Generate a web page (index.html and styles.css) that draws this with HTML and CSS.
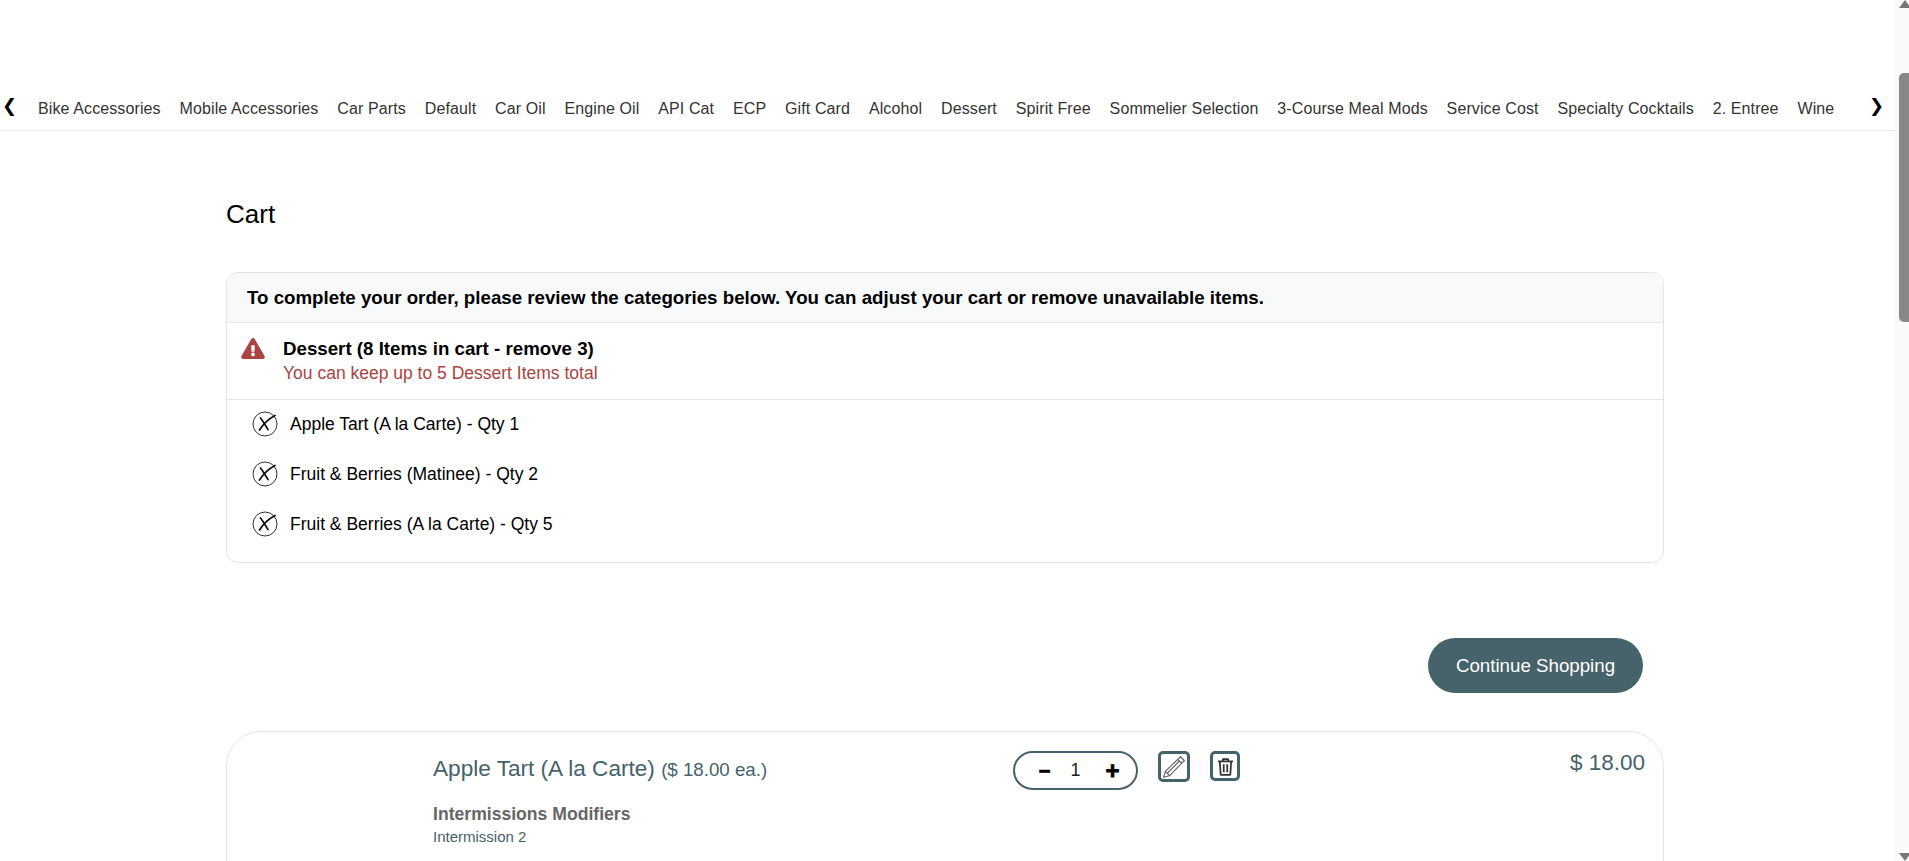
FILE: index.html
```html
<!DOCTYPE html>
<html lang="en">
<head>
<meta charset="utf-8">
<title>Cart</title>
<link rel="stylesheet" href="styles.css">
</head>
<body>
<div class="page">
  <nav class="catnav">
    <span class="arrow">❮</span>
    <ul class="catlist">
      <li>Bike Accessories</li><li>Mobile Accessories</li><li>Car Parts</li><li>Default</li><li>Car Oil</li><li>Engine Oil</li><li>API Cat</li><li>ECP</li><li>Gift Card</li><li>Alcohol</li><li>Dessert</li><li>Spirit Free</li><li>Sommelier Selection</li><li>3-Course Meal Mods</li><li>Service Cost</li><li>Specialty Cocktails</li><li>2. Entree</li><li>Wine</li>
    </ul>
    <span class="arrow arrow-right">❯</span>
  </nav>
  <main class="content">
    <h1 class="title">Cart</h1>
    <section class="review">
      <div class="review-head">To complete your order, please review the categories below. You can adjust your cart or remove unavailable items.</div>
      <div class="review-cat">
        <svg class="warn" viewBox="0 0 576 512" width="24" height="21"><path fill="#a94442" d="M569.517 440.013C587.975 472.007 564.806 512 527.94 512H48.054c-36.937 0-59.999-40.055-41.577-71.987L246.423 23.985c18.467-32.009 64.72-31.951 83.154 0l239.94 416.028zM288 354c-25.405 0-46 20.595-46 46s20.595 46 46 46 46-20.595 46-46-20.595-46-46-46zm-43.673-165.346l7.418 136c.347 6.364 5.609 11.346 11.982 11.346h48.546c6.373 0 11.635-4.982 11.982-11.346l7.418-136c.375-6.874-5.098-12.654-11.982-12.654h-63.383c-6.884 0-12.356 5.78-11.981 12.654z"/></svg>
        <div>
          <div class="cat-name">Dessert (8 Items in cart - remove 3)</div>
          <div class="cat-note">You can keep up to 5 Dessert Items total</div>
        </div>
      </div>
      <ul class="review-items">
        <li><svg class="xicon" viewBox="0 0 26 26" width="26" height="26"><circle cx="13" cy="13" r="12" fill="none" stroke="#333" stroke-width="1"/><path d="M8.500 7c2.500 3 4.500 7 7.500 11.500M23 4.500c-6.500 3.500-11.500 8-15.500 14.500" fill="none" stroke="#111" stroke-width="1.700" stroke-linecap="round"/></svg>Apple Tart (A la Carte) - Qty 1</li>
        <li><svg class="xicon" viewBox="0 0 26 26" width="26" height="26"><circle cx="13" cy="13" r="12" fill="none" stroke="#333" stroke-width="1"/><path d="M8.500 7c2.500 3 4.500 7 7.500 11.500M23 4.500c-6.500 3.500-11.500 8-15.500 14.500" fill="none" stroke="#111" stroke-width="1.700" stroke-linecap="round"/></svg>Fruit &amp; Berries (Matinee) - Qty 2</li>
        <li><svg class="xicon" viewBox="0 0 26 26" width="26" height="26"><circle cx="13" cy="13" r="12" fill="none" stroke="#333" stroke-width="1"/><path d="M8.500 7c2.500 3 4.500 7 7.500 11.500M23 4.500c-6.500 3.500-11.500 8-15.500 14.500" fill="none" stroke="#111" stroke-width="1.700" stroke-linecap="round"/></svg>Fruit &amp; Berries (A la Carte) - Qty 5</li>
      </ul>
    </section>
    <div class="actions"><button class="continue">Continue Shopping</button></div>
    <article class="card">
      <div class="card-info">
        <div class="item-name">Apple Tart (A la Carte) <span class="each">($ 18.00 ea.)</span></div>
        <div class="mod-title">Intermissions Modifiers</div>
        <div class="mod-value">Intermission 2</div>
      </div>
      <div class="card-controls">
        <div class="qty"><span class="qty-btn qty-minus">−</span><span class="qty-num">1</span><span class="qty-btn qty-plus">+</span></div>
        <span class="icon-btn"><svg viewBox="0 0 24 24" width="26" height="26"><path d="M18 2.500l3.500 3.500L8 20l-5.500 1.500L4 16zM15.500 5l3.500 3.500M4 16l4 4M6 17.500L17 6.500" fill="none" stroke="#666" stroke-width="1.100" stroke-linejoin="round"/></svg></span>
        <span class="icon-btn trash"><svg viewBox="0 0 24 24" width="21" height="21"><path d="M3.500 6h17M9 6V3.500h6V6M5.500 6l1 15.500h11l1-15.500M10 9.500v9M14 9.500v9" fill="none" stroke="#333" stroke-width="2" stroke-linejoin="round"/></svg></span>
      </div>
      <div class="card-price">$ 18.00</div>
    </article>
  </main>
</div>
<div class="scrollbar"><span class="sb-up"></span><span class="sb-thumb"></span><span class="sb-down"></span></div>
</body>
</html>
```

FILE: styles.css
```css
* { box-sizing: border-box; }
html, body { margin: 0; height: 861px; overflow: hidden; background: #fff; }
body { font-family: "Liberation Sans", Arial, sans-serif; color: #000; }
.page { width: 1895px; height: 861px; overflow: hidden; padding-top: 87px; }
.catnav { height: 44px; display: flex; align-items: flex-start; border-bottom: 1px solid #e7e7e7; padding-left: 2px; }
.arrow { font-family: "DejaVu Sans", sans-serif; font-size: 18px; line-height: 22px; width: 14px; color: #000; margin-top: 8px; }
.arrow-right { margin-left: auto; margin-right: 12px; }
.catlist { list-style: none; margin: 0; padding: 0 0 0 22px; display: flex; gap: 18.850px; font-size: 16px; letter-spacing: 0.110px; line-height: 44px; color: #333; height: 43px; white-space: nowrap; }
.content { padding: 0 231px 0 226px; }
.title { font-size: 26px; font-weight: 400; margin: 0; padding-top: 68px; line-height: 30px; }
.review { margin-top: 43px; border: 1px solid #e3e5e8; border-radius: 12px; overflow: hidden; height: 291px; }
.review-head { height: 50px; background: #f8f9fa; border-bottom: 1px solid #e3e5e8; padding: 0 20px; font-size: 18.720px; font-weight: 700; line-height: 50px; }
.review-cat { height: 77px; border-bottom: 1px solid #e3e5e8; display: flex; padding: 14px 0 0 14px; gap: 18px; }
.warn { margin-top: 1px; }
.cat-name { font-size: 18.720px; font-weight: 700; line-height: 24px; }
.cat-note { font-size: 17.500px; line-height: 24px; color: #a94442; }
.review-items { list-style: none; margin: 0; padding: 0 0 0 25px; font-size: 17.500px; }
.review-items li { height: 48px; margin-bottom: 2px; display: flex; align-items: center; gap: 12px; }
.actions { display: flex; justify-content: flex-end; padding: 75px 21px 0 0; }
.continue { width: 215px; height: 55px; border: 0; border-radius: 28px; background: #46626a; color: #fff; font: 18.720px "Liberation Sans", Arial, sans-serif; }
.card { margin-top: 38px; height: 300px; border: 1px solid #e3e5e8; border-radius: 35px; display: flex; padding: 0 18px 0 206px; }
.card-info { width: 580px; color: #46626a; padding-top: 22px; }
.item-name { font-size: 22.600px; line-height: 30px; }
.each { font-size: 18.720px; }
.mod-title { font-size: 17.600px; font-weight: 700; color: #666; margin-top: 17px; line-height: 24px; }
.mod-value { font-size: 15px; line-height: 22px; }
.card-controls { display: flex; align-items: flex-start; gap: 20px; padding-top: 19px; flex: 1; }
.qty { width: 125px; height: 39px; border: 2px solid #46626a; border-radius: 20px; display: flex; align-items: center; justify-content: center; font-size: 18px; padding-left: 6px; }
.qty-btn { font-weight: 700; line-height: 30px; width: 16px; text-align: center; color: #000; -webkit-text-stroke: 0.800px #000; }
.qty-minus { font-size: 20px; margin-right: 18px; }
.qty-plus { font-size: 24px; margin-left: 24px; }
.qty-num { color: #222; }
.icon-btn { width: 32px; height: 31px; border: 3px solid #46626a; border-radius: 5px; display: flex; align-items: center; justify-content: center; }
.trash { width: 30px; height: 30px; }
.card-price { color: #46626a; font-size: 22.500px; padding-top: 18px; }
.scrollbar { position: absolute; top: 0; right: 0; width: 14px; height: 861px; background: #fafafa; }
.sb-up { position: absolute; left: 4px; top: 0; width: 0; height: 0; border: 6px solid transparent; border-top: 0; border-bottom: 8px solid #777; }
.sb-thumb { position: absolute; left: 4px; top: 73px; width: 10px; height: 249px; background: #888; border-radius: 5px 0 0 5px; }
.sb-down { position: absolute; left: 4px; top: 853px; width: 0; height: 0; border: 6px solid transparent; border-bottom: 0; border-top: 8px solid #777; }
```
